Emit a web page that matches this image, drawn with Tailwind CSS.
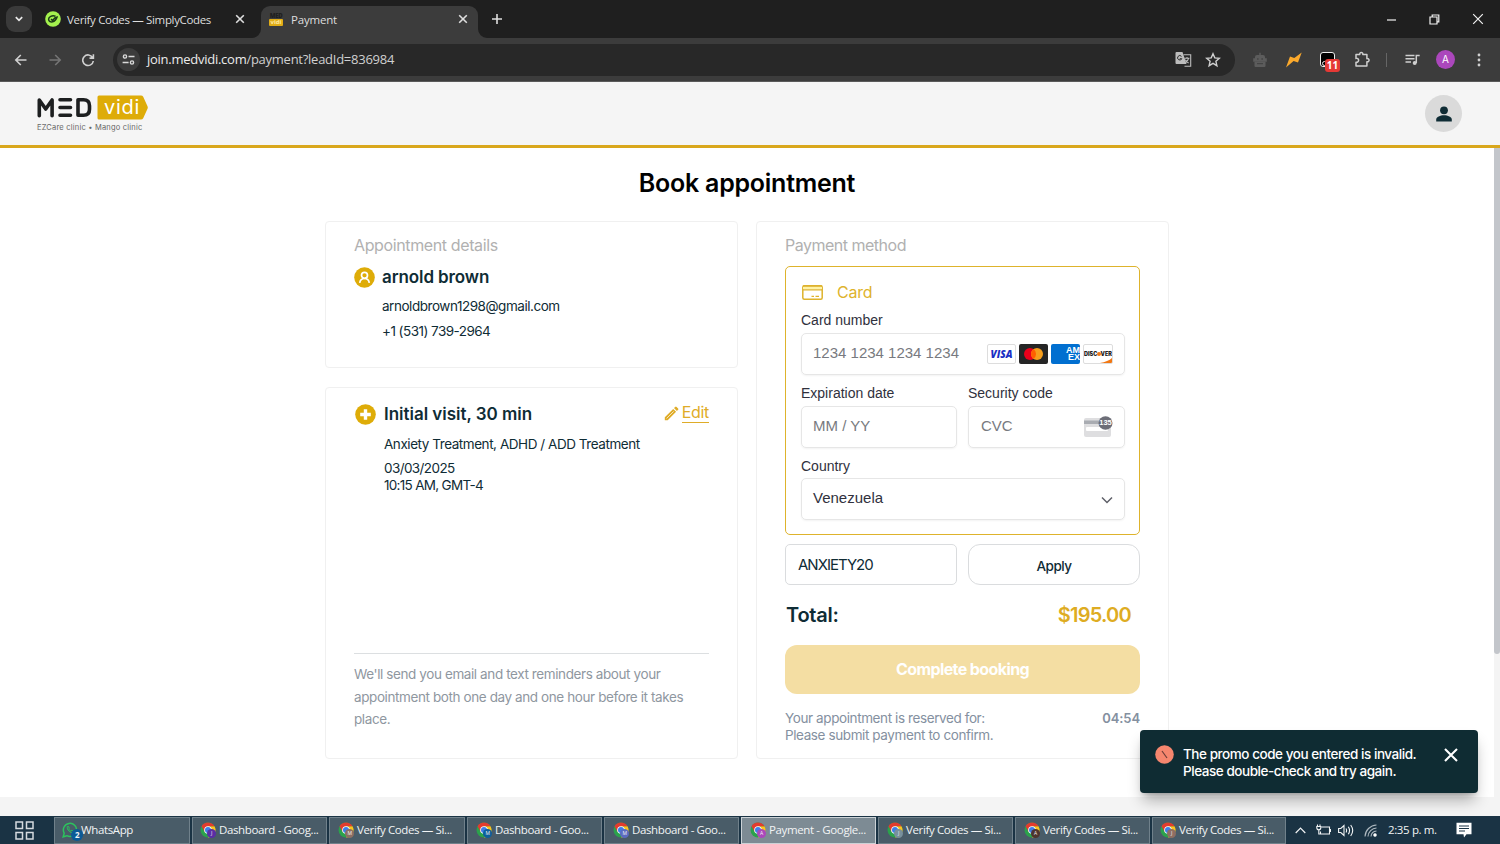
<!DOCTYPE html>
<html lang="en">
<head>
    <meta charset="UTF-8">
    <meta name="viewport" content="width=device-width, initial-scale=1.0">
    <title>Payment</title>
    <script src="https://cdn.jsdelivr.net/npm/@tailwindcss/browser@4"></script>
</head>
<body class="w-[1500px] h-[844px] overflow-hidden flex flex-col bg-white font-['Inter',sans-serif] text-[#0f2c35] whitespace-nowrap">

    <!-- Shared icon symbols -->
    <svg class="hidden">
        <symbol id="chrome" viewBox="0 0 16 16">
            <circle cx="8" cy="8" r="7.5" fill="#2ba24c"/>
            <path d="M8 4.2h6.5A7.5 7.5 0 0 1 8 15.5l3.3-5.6z" fill="#fcc31e"/>
            <path d="M8 4.2h6.5a7.5 7.5 0 0 0-13 0L4.7 9.9z" fill="#e33b2e"/>
            <circle cx="8" cy="8" r="3.8" fill="#fff"/>
            <circle cx="8" cy="8" r="3" fill="#3f7ee8"/>
        </symbol>
        <symbol id="close" viewBox="0 0 10 10">
            <path d="m1.2 1.2 7.6 7.6m0-7.6L1.2 8.8" fill="none" stroke="currentColor" stroke-width="1.6"/>
        </symbol>
    </svg>

    <!-- Tab strip -->
    <div class="h-[38px] shrink-0 bg-[#1f1f1f] flex items-start font-['Open_Sans',sans-serif] text-[12px] text-[#dedede]">
        <div class="w-[26px] h-[26px] ml-[6px] mt-[6px] rounded-[9px] bg-[#3a3a3a] flex items-center justify-center">
            <svg class="w-[10px] h-[10px]" viewBox="0 0 10 10"><path d="m1.8 3.2 3.2 3.2 3.2-3.2" fill="none" stroke="#e8e8e8" stroke-width="1.7"/></svg>
        </div>
        <div class="w-[229px] h-[38px] flex items-center pl-[13px]">
            <svg class="w-4 h-4 shrink-0" viewBox="0 0 16 16">
                <circle cx="8" cy="8" r="7.8" fill="#a4f14e"/>
                <path d="M10.5 5.2C7 4 3.6 5.8 3.6 8.2c0 2.3 2.2 3 4 2.6 2.6-.5 3.8-2.7 4.8-5.6M6 8.2l1.5 1.2L10.8 6" fill="none" stroke="#1b3a16" stroke-width="1.5"/>
            </svg>
            <span class="ml-[6px] mt-[2px] w-[160px] text-[11.5px] tracking-[-0.34px]">Verify Codes — SimplyCodes</span>
            <svg class="w-[10px] h-[10px] ml-[8px]"><use href="#close"/></svg>
        </div>
        <div class="w-[217px] h-[32px] mt-[6px] rounded-t-[9px] bg-[#3c3c3c] flex items-center pl-[8px] relative">
            <svg class="absolute -left-[9px] bottom-0 w-[9px] h-[9px]" viewBox="0 0 9 9"><path d="M9 0v9H0a9 9 0 0 0 9-9z" fill="#3c3c3c"/></svg>
            <svg class="absolute -right-[9px] bottom-0 w-[9px] h-[9px]" viewBox="0 0 9 9"><path d="M0 0v9h9a9 9 0 0 1-9-9z" fill="#3c3c3c"/></svg>
            <div class="w-[14px] h-[14px] -mt-[4px] shrink-0 text-center">
                <div class="h-[6px] text-[6px] leading-[6px] font-extrabold text-[#202020] tracking-[-0.3px]">MED</div>
                <div class="h-[7px] bg-[#e0ac16] rounded-[1px] text-[6px] leading-[6px] font-bold text-[#ffe9a0]">vidi</div>
            </div>
            <span class="ml-[8px] w-[166px] -mt-[4px] text-[11.5px] tracking-[-0.2px]">Payment</span>
            <svg class="w-[10px] h-[10px] ml-px -mt-[6px]"><use href="#close"/></svg>
        </div>
        <svg class="w-[12px] h-[12px] ml-[13px] mt-[13px]" viewBox="0 0 12 12"><path d="M6 1v10M1 6h10" stroke="#dedede" stroke-width="1.6"/></svg>
        <div class="ml-auto flex items-center h-[38px] pr-[16px]">
            <svg class="w-[11px] h-[11px]" viewBox="0 0 11 11"><path d="M1 6h9" stroke="#f2f2f2" stroke-width="1.2"/></svg>
            <svg class="w-[11px] h-[11px] ml-[32px]" viewBox="0 0 11 11"><path d="M1 3h7v7H1zM3.2 3V1h6.6v6.8H8" fill="none" stroke="#f2f2f2" stroke-width="1.2"/></svg>
            <svg class="w-[12px] h-[12px] ml-[32px]" viewBox="0 0 12 12"><path d="m1.2 1.2 9.6 9.6m0-9.6-9.6 9.6" stroke="#f2f2f2" stroke-width="1.2"/></svg>
        </div>
    </div>

    <!-- Address bar -->
    <div class="h-[44px] shrink-0 bg-[#3c3c3c] border-b border-[#5a5a5a] flex items-center text-[#c9c9c9]">
        <svg class="w-[14px] h-[14px] ml-[14px]" viewBox="0 0 14 14"><path d="M12.5 7H2m4.8-5L1.8 7l5 5" fill="none" stroke="#d0d0d0" stroke-width="1.6"/></svg>
        <svg class="w-[14px] h-[14px] ml-[20px]" viewBox="0 0 14 14"><path d="M1.5 7H12M7.2 2l5 5-5 5" fill="none" stroke="#757575" stroke-width="1.6"/></svg>
        <svg class="w-[14px] h-[14px] ml-[19px]" viewBox="0 0 14 14"><path d="M11.6 4.5A5.3 5.3 0 1 0 12.3 8M12.4 1.2v3.9H8.5" fill="none" stroke="#d0d0d0" stroke-width="1.6"/></svg>
        <div class="w-[1122px] h-[32px] ml-[18px] rounded-full bg-[#282828] flex items-center pl-[4px]">
            <div class="w-[23px] h-[23px] rounded-full bg-[#3c3c3c] flex items-center justify-center">
                <svg class="w-[13px] h-[13px]" viewBox="0 0 13 13" fill="none" stroke="#dadada" stroke-width="1.4"><circle cx="3" cy="3.5" r="1.6"/><circle cx="10" cy="9.5" r="1.6"/><path d="M6.5 3.5h6M.6 9.5h6"/></svg>
            </div>
            <span class="ml-[7px] font-['Open_Sans',sans-serif] text-[13px] tracking-[-0.26px] text-[#d0d0d0]"><span class="text-[#ececec]">join.medvidi.com</span>/payment?leadId=836984</span>
            <svg class="w-[17px] h-[17px] ml-auto" viewBox="0 0 17 17">
                <path d="M1.5 1h6l4 12h-10a1 1 0 0 1-1-1V2a1 1 0 0 1 1-1z" fill="#bdbdbd"/>
                <path d="M6.5 5.4a2.2 2.2 0 1 0 .3 2.3H4.8" fill="none" stroke="#282828" stroke-width="1"/>
                <path d="M8.5 3.8h7.2v11.4H9.5M9.3 7.2h5.2M12 6v1.2m1.7 0c-.6 2.2-2 3.7-3.4 4.8m0-3.2c.8 1.4 2 2.5 3.3 3.2" fill="none" stroke="#bdbdbd" stroke-width="1.1"/>
            </svg>
            <svg class="w-[16px] h-[16px] ml-[13px] mr-[14px]" viewBox="0 0 16 16"><path d="m8 1.8 1.8 4.1 4.5.4-3.4 3 1 4.4L8 11.4l-3.9 2.3 1-4.4-3.4-3 4.5-.4z" fill="none" stroke="#cfcfcf" stroke-width="1.4"/></svg>
        </div>
        <!-- Extensions -->
        <svg class="w-[16px] h-[16px] ml-[17px]" viewBox="0 0 16 16" fill="#5c5c5c"><path d="M7.3 3V.8h1.4V3H11a2 2 0 0 1 2 2v1.2h1.8v3.6H1.2V6.2H3V5a2 2 0 0 1 2-2z"/><path d="M2.5 9.8h11V14a1 1 0 0 1-1 1h-9a1 1 0 0 1-1-1z"/><path d="M5 6.2h1.6v1.6H5zm4.4 0H11v1.6H9.4zM5 11h6v1.2H5z" fill="#444"/></svg>
        <svg class="w-[16px] h-[16px] ml-[18px]" viewBox="0 0 16 16"><path d="M15.7.5 12 10.5 7.6 9 0 15.500 4 4.5l4.300 1.500z" fill="#fba92c"/></svg>
        <div class="w-[15px] h-[15px] ml-[18px] rounded-[3px] bg-black border border-[#eee] relative">
            <span class="absolute left-[1px] bottom-0 w-[5px] h-[5px] rounded-full border border-[#eee]"></span>
            <span class="absolute left-[4px] top-[6px] w-[15px] h-[13px] rounded-[3px] bg-[#e53935] text-white text-[10px] leading-[13px] font-bold text-center font-['Open_Sans',sans-serif]">11</span>
        </div>
        <svg class="w-[17px] h-[17px] ml-[19px]" viewBox="0 0 17 17"><path d="M2 3.6h3.8a1.600 1.600 0 1 1 3 0h4.100v4.100a1.600 1.600 0 1 1 0 3v4.200H2v-3.700a2 2 0 1 0 0-3.800z" fill="none" stroke="#cfcfcf" stroke-width="1.5" stroke-linejoin="round"/></svg>
        <div class="w-px h-[14px] ml-[15px] bg-[#666]"></div>
        <svg class="w-[15px] h-[14px] ml-[18px]" viewBox="0 0 15 14"><path d="M.5 2.500h9M.5 5.700h9M.5 8.900h5.500M11.300 10V2.500h3.400" fill="none" stroke="#cfcfcf" stroke-width="1.5"/><circle cx="9.700" cy="10" r="2" fill="#cfcfcf"/></svg>
        <div class="w-[19px] h-[19px] ml-[16px] rounded-full bg-[#ab47bc] text-white text-[10px] leading-[19px] text-center">A</div>
        <svg class="w-[4px] h-[14px] ml-[22px]" viewBox="0 0 4 14" fill="#cfcfcf"><circle cx="2" cy="2" r="1.4"/><circle cx="2" cy="7" r="1.4"/><circle cx="2" cy="12" r="1.4"/></svg>
    </div>

    <!-- Site header -->
    <header class="h-[66px] shrink-0 bg-[#f5f5f5] border-b-[3px] border-[#d9a71c] flex items-center justify-between pl-[37px] pr-[38px]">
        <div class="flex flex-col">
            <div class="flex items-center h-[25px]">
                <svg class="w-[55px] h-[21px]" viewBox="0 0 55 21" fill="none" stroke="#1d1f20" stroke-width="3.600" stroke-linecap="round" stroke-linejoin="round">
                    <path d="M2.300 18.700V3l6.400 9L15.100 3v15.700"/>
                    <path d="M23 2.800h10.500M23 10.500h10.500M23 18.300h10.500"/>
                    <path d="M41 2.800h5.500q6 0 6 6v3.500q0 6-6 6H41z"/>
                </svg>
                <div class="relative w-[51px] h-[25px] ml-[5px]">
                    <svg class="w-[51px] h-[25px]" viewBox="0 0 51 25"><path d="M2 .5h42q1.500 0 2.200 1.300l4.300 9.400q.6 1.300 0 2.600l-4.300 9.400q-.7 1.300-2.200 1.300H2q-1.500 0-1.500-1.500V2Q.5.5 2 .5z" fill="#deac08"/></svg>
                    <span class="absolute left-[7px] top-0 text-[20px] leading-[24px] text-white tracking-[0.7px]">vidi</span>
                </div>
            </div>
            <span class="text-[7.5px] leading-[10px] mt-[3px] text-[#666] tracking-[0.2px]">EZCare clinic • Mango clinic</span>
        </div>
        <div class="w-[37px] h-[37px] rounded-full bg-[#dadada] flex items-center justify-center">
            <svg class="w-[16px] h-[16px]" viewBox="0 0 16 16" fill="#0f2c35"><circle cx="8" cy="4.300" r="3.900"/><path d="M.2 15.600v-2c0-2.700 4-4.300 7.800-4.300s7.800 1.600 7.800 4.300v2z"/></svg>
        </div>
    </header>

    <!-- Page -->
    <main class="h-[668px] shrink-0 bg-[#f4f4f4] flex justify-between items-start">
        <div class="w-[1494px] h-[649px] bg-white">
            <h1 class="pt-[17px] text-center text-[25px] leading-[36px] font-semibold text-black tracking-[-0.25px]">Book appointment</h1>

            <div class="w-[844px] mx-auto mt-[20px] flex items-start gap-[18px]">
                <div class="w-[413px] flex flex-col gap-[19px]">
                    <!-- Patient -->
                    <section class="h-[147px] border border-[#f0f0f0] rounded-[4px] pl-[28px] pt-[11px]">
                        <h2 class="text-[16px] leading-6 text-[#b1b1b1] tracking-[-0.38px]">Appointment details</h2>
                        <div class="flex items-center mt-[8px]">
                            <svg class="w-[21px] h-[21px]" viewBox="0 0 21 21"><circle cx="10.500" cy="10.500" r="10.300" fill="#deac08"/><circle cx="10.500" cy="8.300" r="3" fill="none" stroke="#fff" stroke-width="1.700"/><path d="M5.700 15.800c.5-3 2.300-4.300 4.800-4.300s4.300 1.300 4.800 4.300" fill="none" stroke="#fff" stroke-width="1.700"/></svg>
                            <span class="ml-[7px] text-[17px] leading-6 font-semibold tracking-[-0.1px]">arnold brown</span>
                        </div>
                        <p class="ml-[28px] mt-[5px] text-[13.5px] leading-6 tracking-[-0.46px]">arnoldbrown1298@gmail.com</p>
                        <p class="ml-[28px] mt-px text-[13.5px] leading-6 tracking-[-0.54px]">+1 (531) 739-2964</p>
                    </section>

                    <!-- Visit -->
                    <section class="h-[372px] border border-[#f0f0f0] rounded-[4px] px-[28px] pt-[14px]">
                        <div class="flex items-center">
                            <svg class="w-[21px] h-[21px] ml-[1px]" viewBox="0 0 21 21"><circle cx="10.500" cy="10.500" r="10.300" fill="#deac08"/><path d="M10.500 5.200v10.600M5.200 10.500h10.600" stroke="#fff" stroke-width="3.400"/></svg>
                            <span class="ml-[8px] text-[17px] leading-6 font-semibold tracking-[-0.02px]">Initial visit, 30 min</span>
                            <a class="ml-auto -mt-[2px] flex items-center text-[#dfac28]">
                                <svg class="w-[15px] h-[15px]" viewBox="0 0 15 15"><path d="M.8 14.200v-2.900L9.200 2.900l2.900 2.900-8.400 8.400zM10 2.100 11.200.9a1 1 0 0 1 1.400 0l1.500 1.500a1 1 0 0 1 0 1.400L12.900 5z" fill="#dfac28"/><path d="m2.600 12.400 7-7" stroke="#fff" stroke-width=".7"/></svg>
                                <span class="ml-[3px] text-[16px] leading-[19px] border-b border-[#dfac28] tracking-[-0.3px]">Edit</span>
                            </a>
                        </div>
                        <p class="ml-[30px] mt-[6px] text-[13.5px] leading-6 tracking-[-0.45px]">Anxiety Treatment, ADHD / ADD Treatment</p>
                        <p class="ml-[30px] mt-[4px] text-[13.5px] leading-[17px] tracking-[-0.7px]"><span class="tracking-[-0.6px]">03/03/2025</span><br>10:15 AM, GMT-4</p>
                        <p class="mt-[159px] pt-[9px] border-t border-[#dcdfe1] text-[13.5px] leading-[22.6px] text-[#8f979f] tracking-[-0.4px]">We'll send you email and text reminders about your<br>appointment both one day and one hour before it takes<br>place.</p>
                    </section>
                </div>

                <!-- Payment -->
                <section class="w-[413px] h-[538px] border border-[#f0f0f0] rounded-[4px] pl-[29px] pr-[28px] pt-[11px]">
                    <h2 class="-ml-px text-[16px] leading-6 text-[#b1b1b1] tracking-[-0.5px]">Payment method</h2>
                    <div class="h-[269px] mt-[9px] -ml-px border border-[#deb32c] rounded-[5px] pl-[15px] pr-[14px] pt-[13px] font-['Liberation_Sans',sans-serif] text-[#30313d]">
                        <div class="flex items-center h-6 text-[#deb32c]">
                            <svg class="w-[21px] h-[15px] ml-px" viewBox="0 0 21 15"><rect x=".8" y=".8" width="19.400" height="13.400" rx="1.500" fill="none" stroke="#deb32c" stroke-width="1.500"/><path d="M1 3h19" stroke="#fff3a6" stroke-width="2.500"/><path d="M1 1h19M1 4.800h19M9.500 11.300h2.500m1.500 0h3.500" stroke="#deb32c" stroke-width="1.300"/></svg>
                            <span class="ml-[14px] font-['Inter',sans-serif] text-[16px] tracking-[-0.2px]">Card</span>
                        </div>
                        <p class="mt-[6px] text-[14px] leading-[20px]">Card number</p>
                        <div class="h-[42px] mt-[3px] border border-[#e6e6e6] rounded-[5px] shadow-xs flex items-center px-[11px] pb-[2px] text-[15px] text-[#787a80]">
                            <span>1234 1234 1234 1234</span>
                            <div class="ml-auto mt-px flex gap-[3px]">
                                <div class="w-[29px] h-[20px] border border-[#ddd] rounded-[2px] text-[10px] leading-[18px] font-extrabold italic text-[#1a2fc4] text-center font-['Open_Sans',sans-serif]">VISA</div>
                                <svg class="w-[29px] h-[20px]" viewBox="0 0 29 20"><rect width="29" height="20" rx="2" fill="#252525"/><circle cx="11" cy="10" r="6" fill="#eb001b"/><circle cx="18" cy="10" r="6" fill="#f79e1b"/><path d="M14.500 5.100a6 6 0 0 1 0 9.800 6 6 0 0 1 0-9.800z" fill="#ff5f00"/></svg>
                                <div class="w-[29px] h-[20px] rounded-[2px] bg-[#016fd0] text-white text-[9px] leading-[7px] font-bold text-right pt-[3px] overflow-hidden">AM<br>EX</div>
                                <div class="w-[30px] h-[20px] border border-[#ddd] rounded-[2px] relative overflow-hidden text-[5.5px] leading-[18px] font-black text-[#222] flex items-center justify-center font-['Inter',sans-serif]">
                                    <svg class="absolute right-0 bottom-0 w-[12px] h-[5px]" viewBox="0 0 12 5"><path d="M0 5Q8 3.500 12 0v5z" fill="#f27712"/></svg>
                                    DISC<span class="w-[4px] h-[4px] rounded-full bg-[#f27712]"></span>VER
                                </div>
                            </div>
                        </div>
                        <div class="flex gap-[11px] mt-[8px]">
                            <div class="w-[156px]">
                                <p class="text-[14px] leading-[20px]">Expiration date</p>
                                <div class="h-[42px] mt-[3px] border border-[#e6e6e6] rounded-[5px] shadow-xs flex items-center px-[11px] pb-[2px] text-[15px] text-[#787a80]">MM / YY</div>
                            </div>
                            <div class="w-[157px]">
                                <p class="text-[14px] leading-[20px]">Security code</p>
                                <div class="h-[42px] mt-[3px] border border-[#e6e6e6] rounded-[5px] shadow-xs flex items-center px-[11px] pb-[2px] text-[15px] text-[#787a80]">
                                    <span class="ml-px">CVC</span>
                                    <div class="w-[29px] h-[21px] ml-auto relative">
                                        <svg class="w-[29px] h-[21px]" viewBox="0 0 29 21"><rect y="2" width="27" height="19" rx="2" fill="#dedee0"/><path d="M0 4.500h27v3.500H0z" fill="#a9acb2"/><rect x="2" y="11" width="22" height="4" rx="1" fill="#fff"/><ellipse cx="21.500" cy="7" rx="7" ry="6.800" fill="#6d6e78"/></svg>
                                        <span class="absolute left-[15px] top-[2px] w-[13px] text-[7.5px] leading-[10px] font-bold text-white text-center">135</span>
                                    </div>
                                </div>
                            </div>
                        </div>
                        <p class="mt-[8px] text-[14px] leading-[20px]">Country</p>
                        <div class="h-[42px] mt-[2px] border border-[#e6e6e6] rounded-[5px] shadow-xs flex items-center justify-between px-[11px] pb-[2px] text-[15px]">
                            <span>Venezuela</span>
                            <svg class="w-[12px] h-[8px] mt-[3px]" viewBox="0 0 12 8"><path d="m1 1.500 5 5 5-5" fill="none" stroke="#5f6068" stroke-width="1.500"/></svg>
                        </div>
                    </div>

                    <!-- Promo code -->
                    <div class="flex gap-[11px] mt-[9px] -ml-px">
                        <div class="w-[172px] h-[41px] border border-[#dadcde] rounded-[5px] px-[12px] leading-[40px] text-[15px] tracking-[-1px]">ANXIETY20</div>
                        <div class="w-[172px] h-[41px] border border-[#dadcde] rounded-[12px] text-center leading-[42px] text-[13.5px] font-medium tracking-[-0.5px]">Apply</div>
                    </div>

                    <div class="flex justify-between mt-[15px] pr-[9px] text-[20px] leading-[30px] font-semibold">
                        <span class="tracking-[-0.25px]">Total:</span>
                        <span class="text-[#deac22] tracking-[-0.75px]">$195.00</span>
                    </div>
                    <div class="h-[49px] mt-[15px] -ml-px rounded-[12px] bg-[#f4dea3] text-white text-center text-[16px] leading-[49px] font-bold tracking-[-0.6px]">Complete booking</div>
                    <div class="flex justify-between mt-[16px] text-[13.5px] leading-[17px] text-[#8490a0] tracking-[-0.4px]">
                        <p class="-ml-px">Your appointment is reserved for:<br>Please submit payment to confirm.</p>
                        <span class="text-[13px] font-semibold tracking-[-0.1px]">04:54</span>
                    </div>
                </section>
            </div>
        </div>
        <div class="w-[6px] h-[506px] rounded-b-[3px] bg-[#c3c6cb]"></div>
    </main>

    <!-- Toast -->
    <div class="absolute left-[1140px] top-[730px] w-[338px] h-[63px] rounded-[4px] bg-[#0f2c33] shadow-lg shadow-black/30 flex pt-[15px] pl-[15px] text-white">
        <svg class="w-[19px] h-[19px]" viewBox="0 0 19 19"><circle cx="9.500" cy="9.500" r="9.300" fill="#f5866e"/><path d="m7 6 5 7" stroke="#6b3d38" stroke-width="1.200"/></svg>
        <p class="ml-[9px] mt-[1px] w-[260px] text-[13.5px] leading-[17px] font-medium tracking-[-0.45px]">The promo code you entered is invalid.<br>Please double-check and try again.</p>
        <svg class="w-[14px] h-[14px] ml-px mt-[3px]" viewBox="0 0 14 14"><path d="m1 1 12 12M13 1 1 13" stroke="#fff" stroke-width="2.100"/></svg>
    </div>

    <!-- Taskbar -->
    <footer class="h-[28px] shrink-0 bg-[#1a3344] flex items-center font-['Open_Sans',sans-serif] text-[11.5px] text-[#f2f4f5] tracking-[-0.37px]">
        <svg class="w-[19px] h-[19px] ml-[15px] mr-[20px] shrink-0" viewBox="0 0 19 19" fill="none" stroke="#d5dade" stroke-width="1.500"><path d="M1 1h6.500v6.500H1zM11.500 1H18v6.500h-6.500zM1 11.500h6.500V18H1zM11.500 11.500H18V18h-6.500z"/></svg>
        <div class="flex gap-[2px]">
            <div class="w-[136px] h-[27px] bg-[#495c68] border border-[#70818b] flex items-center pl-[7px]">
                <span class="relative w-[19px] h-[17px]">
                    <svg class="w-[16px] h-[16px]" viewBox="0 0 16 16" fill="none" stroke="#2cc35d" stroke-width="1.500"><path d="m1.200 14.800 1-3.700a6.600 6.600 0 1 1 2.600 2.600z"/><path d="M5.300 4.600c-.8 3 3 6.600 5.800 6l.5-1.300-1.800-1-1 .8C7.600 8.500 7 7.700 6.700 6.900l.6-.7-.7-1.700z" stroke-width="1"/></svg>
                    <span class="absolute left-[9px] top-[7px] w-[12px] h-[12px] rounded-full bg-[#0b5a96] text-[8px] leading-[12px] font-bold text-center">2</span>
                </span>
                <span>WhatsApp</span>
            </div>
            <div class="w-[135px] h-[27px] bg-[#495c68] border border-[#70818b] flex items-center pl-[7px]">
                <span class="relative mr-[3px]"><svg class="w-4 h-4"><use href="#chrome"/></svg><span class="absolute left-[7px] top-[7px] w-[9px] h-[9px] rounded-full bg-[#5a2ea6] text-[5px] leading-[9px] text-center">J</span></span>
                <span>Dashboard - Goog...</span>
            </div>
            <div class="w-[136px] h-[27px] bg-[#495c68] border border-[#70818b] flex items-center pl-[8px]">
                <span class="relative mr-[3px]"><svg class="w-4 h-4"><use href="#chrome"/></svg><span class="absolute left-[7px] top-[7px] w-[9px] h-[9px] rounded-full bg-[#8d6e63] text-[5px] leading-[9px] text-center">M</span></span>
                <span>Verify Codes — Si...</span>
            </div>
            <div class="w-[135px] h-[27px] bg-[#495c68] border border-[#70818b] flex items-center pl-[8px]">
                <span class="relative mr-[3px]"><svg class="w-4 h-4"><use href="#chrome"/></svg><span class="absolute left-[7px] top-[7px] w-[9px] h-[9px] rounded-full bg-[#0d5f9c] text-[5px] leading-[9px] text-center">M</span></span>
                <span>Dashboard - Goo...</span>
            </div>
            <div class="w-[135px] h-[27px] bg-[#495c68] border border-[#70818b] flex items-center pl-[8px]">
                <span class="relative mr-[3px]"><svg class="w-4 h-4"><use href="#chrome"/></svg><span class="absolute left-[7px] top-[7px] w-[9px] h-[9px] rounded-full bg-[#5c6bc0] text-[5px] leading-[9px] text-center">M</span></span>
                <span>Dashboard - Goo...</span>
            </div>
            <div class="w-[135px] h-[27px] bg-[#7d8b94] border border-[#cbd2d6] flex items-center pl-[8px]">
                <span class="relative mr-[3px]"><svg class="w-4 h-4"><use href="#chrome"/></svg><span class="absolute left-[7px] top-[7px] w-[9px] h-[9px] rounded-full bg-[#ab47bc] text-[5px] leading-[9px] text-center">A</span></span>
                <span>Payment - Google...</span>
            </div>
            <div class="w-[135px] h-[27px] bg-[#495c68] border border-[#70818b] flex items-center pl-[8px]">
                <span class="relative mr-[3px]"><svg class="w-4 h-4"><use href="#chrome"/></svg><span class="absolute left-[7px] top-[7px] w-[9px] h-[9px] rounded-full bg-[#78909c] text-[5px] leading-[9px] text-center">J</span></span>
                <span>Verify Codes — Si...</span>
            </div>
            <div class="w-[135px] h-[27px] bg-[#495c68] border border-[#70818b] flex items-center pl-[8px]">
                <span class="relative mr-[3px]"><svg class="w-4 h-4"><use href="#chrome"/></svg><span class="absolute left-[7px] top-[7px] w-[9px] h-[9px] rounded-full bg-[#4e342e] text-[5px] leading-[9px] text-center">A</span></span>
                <span>Verify Codes — Si...</span>
            </div>
            <div class="w-[134px] h-[27px] bg-[#495c68] border border-[#70818b] flex items-center pl-[7px]">
                <span class="relative mr-[3px]"><svg class="w-4 h-4"><use href="#chrome"/></svg><span class="absolute left-[7px] top-[7px] w-[9px] h-[9px] rounded-full bg-[#8d6e63] text-[5px] leading-[9px] text-center">J</span></span>
                <span>Verify Codes — Si...</span>
            </div>
        </div>
        <!-- System tray -->
        <svg class="w-[11px] h-[7px] ml-[9px] shrink-0" viewBox="0 0 11 7"><path d="m.7 6 4.800-4.800L10.300 6" fill="none" stroke="#f2f4f5" stroke-width="1.200"/></svg>
        <svg class="w-[15px] h-[12px] ml-[10px] shrink-0" viewBox="0 0 15 12" fill="none" stroke="#f2f4f5" stroke-width="1.100"><path d="M5.500 3h8v7H4.500V7.500M14.500 5v3M1.500.5v2m2.500-2v2M.8 2.500h4v1.200a2 2 0 0 1-4 0zM2.800 5.700V10h1.700"/></svg>
        <svg class="w-[16px] h-[13px] ml-[7px] shrink-0" viewBox="0 0 16 13" fill="none" stroke="#f2f4f5" stroke-width="1.100"><path d="M.6 4.500h2.200L6 1.500v10l-3.200-3H.6zM8 4.500q1.200 2 0 4M10.300 2.700q2.500 3.800 0 7.600M12.700 1q4 5.500 0 11"/></svg>
        <svg class="w-[13px] h-[13px] ml-[10px] shrink-0" viewBox="0 0 13 13" fill="none" stroke="#aeb9c0" stroke-width="1.100"><path d="M1 12.500A12 12 0 0 1 12.500 1M4 12.500A9 9 0 0 1 12.500 4M7 12.500A6 6 0 0 1 12.500 7"/><circle cx="11" cy="11" r="1.200" fill="#fff" stroke="#fff"/></svg>
        <span class="ml-[11px] w-[49px]">2:35 p. m.</span>
        <svg class="w-[16px] h-[16px] ml-[19px] shrink-0" viewBox="0 0 16 16"><path d="M.5.8h15v11.400h-5L8 15.500l-.5-3.300h-7z" fill="#fff"/><path d="M3 4h10M3 6.500h10M3 9h6" stroke="#1a3344" stroke-width="1.200"/></svg>
    </footer>
</body>
</html>
